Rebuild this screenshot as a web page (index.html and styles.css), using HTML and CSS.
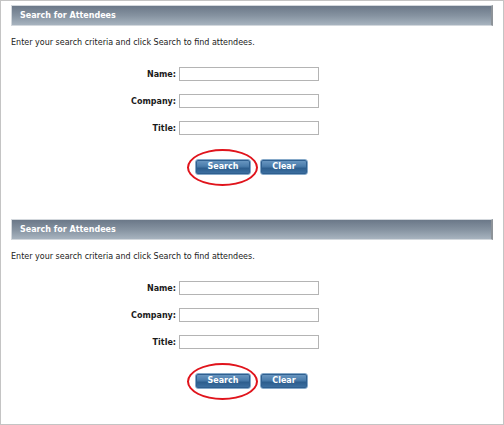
FILE: index.html
```html
<!DOCTYPE html>
<html>
<head>
<meta charset="utf-8">
<link rel="stylesheet" href="styles.css">
</head>
<body>
<div class="frame">
  <section class="panel">
    <div class="header">Search for Attendees</div>
    <p class="intro">Enter your search criteria and click Search to find attendees.</p>
    <div class="form">
      <div class="row"><label class="label">Name:</label><input class="field" type="text"></div>
      <div class="row"><label class="label">Company:</label><input class="field" type="text"></div>
      <div class="row"><label class="label">Title:</label><input class="field" type="text"></div>
    </div>
    <div class="buttons">
      <span class="btn-wrap"><button class="btn btn-search">Search</button><span class="ring"></span></span>
      <button class="btn btn-clear">Clear</button>
    </div>
  </section>
  <section class="panel panel-second">
    <div class="header">Search for Attendees</div>
    <p class="intro">Enter your search criteria and click Search to find attendees.</p>
    <div class="form">
      <div class="row"><label class="label">Name:</label><input class="field" type="text"></div>
      <div class="row"><label class="label">Company:</label><input class="field" type="text"></div>
      <div class="row"><label class="label">Title:</label><input class="field" type="text"></div>
    </div>
    <div class="buttons">
      <span class="btn-wrap"><button class="btn btn-search">Search</button><span class="ring"></span></span>
      <button class="btn btn-clear">Clear</button>
    </div>
  </section>
</div>
</body>
</html>
```
FILE: styles.css
```css
html, body {
  margin: 0;
  padding: 0;
  background: #ffffff;
}
.frame {
  box-sizing: border-box;
  width: 504px;
  height: 425px;
  border: 1px solid #c4c4c4;
  padding: 4px 10px 0 10px;
  font-family: "DejaVu Sans", Verdana, sans-serif;
  font-size: 8px;
  color: #1a1a1a;
}
.panel-second {
  margin-top: 44px;
}
.header {
  box-sizing: border-box;
  height: 21px;
  line-height: 19px;
  padding-left: 8px;
  color: #ffffff;
  font-weight: bold;
  font-size: 8px;
  background: linear-gradient(to bottom, #6b7888 0%, #8592a0 50%, #a7b3bf 100%);
  border: 1px solid #d3d8dd;
  border-right: 2px solid #8d9399;
}
.intro {
  margin: 12px 0 0 0;
  height: 10px;
  line-height: 10px;
}
.form {
  margin-top: 19px;
  display: flex;
  flex-direction: column;
  gap: 13px;
}
.row {
  display: flex;
  align-items: center;
  gap: 3px;
}
.label {
  width: 165px;
  text-align: right;
  font-weight: bold;
  font-size: 8px;
}
.field {
  box-sizing: border-box;
  width: 140px;
  height: 14px;
  margin: 0;
  padding: 0;
  border: 1px solid #b4b4b4;
  background: #ffffff;
}
.buttons {
  margin-top: 24px;
  padding-left: 184px;
  display: flex;
  gap: 9px;
  height: 16px;
}
.btn-wrap {
  position: relative;
  display: inline-flex;
}
.btn {
  box-sizing: border-box;
  height: 16px;
  margin: 0;
  padding: 0;
  border: 1px solid #86a9c9;
  border-radius: 3px;
  color: #ffffff;
  font-family: "DejaVu Sans", Verdana, sans-serif;
  font-weight: bold;
  font-size: 8px;
  line-height: 14px;
  background: linear-gradient(to bottom, #6d9ac4 0%, #4a7cab 45%, #2d5e8e 60%, #3f72a3 100%);
  box-shadow: inset 0 0 0 1px #2f5f8f;
}
.btn-search {
  width: 56px;
}
.btn-clear {
  width: 48px;
}
.ring {
  position: absolute;
  left: -8px;
  top: -10px;
  width: 71px;
  height: 37px;
  box-sizing: border-box;
  border: 2px solid #e0141c;
  border-radius: 50%;
  pointer-events: none;
}
```
